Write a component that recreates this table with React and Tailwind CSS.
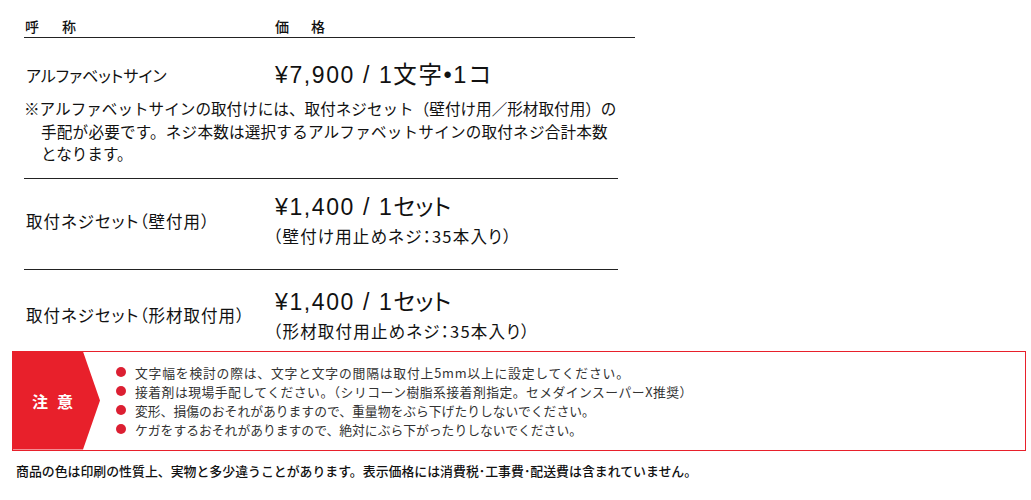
import React from "react";

const PriceCell = ({ price, unit, unitClass, note }) => (
  <div className="flex flex-col">
    <div className="text-[23px] leading-[30px] tracking-[1.6px] text-[#111] font-['Liberation_Sans','Noto_Sans_CJK_JP',sans-serif] whitespace-nowrap">
      {price}
      <span className={unitClass}>{unit}</span>
    </div>
    {note && (
      <div className="text-[16.5px] leading-[24px] tracking-[1.2px] mt-[2px] -ml-[2px] text-[#111] [font-feature-settings:'palt'] whitespace-nowrap">
        {note}
      </div>
    )}
  </div>
);

const CAUTIONS = [
  { text: "文字幅を検討の際は、文字と文字の間隔は取付上5mm以上に設定してください。", cls: "tracking-[0.8px]" },
  { text: "接着剤は現場手配してください。（シリコーン樹脂系接着剤指定。セメダインスーパーX推奨）", cls: "tracking-[0.5px]" },
  { text: "変形、損傷のおそれがありますので、重量物をぶら下げたりしないでください。", cls: "" },
  { text: "ケガをするおそれがありますので、絶対にぶら下がったりしないでください。", cls: "" },
];

export default function App() {
  return (
    <div className="w-[1031px] h-[500px] bg-white text-[#111] font-['Noto_Sans_CJK_JP','Noto_Sans',sans-serif]">
      <div className="ml-[24px] w-[611px]">
        {/* header */}
        <div className="flex pt-[17px] pb-[2px] leading-[18px] text-[14px] font-medium border-b border-[#222]">
          <div className="w-[251px] pl-[1px] flex">
            <span className="mr-[23px]">呼</span>
            <span>称</span>
          </div>
          <div className="flex">
            <span className="mr-[22px]">価</span>
            <span>格</span>
          </div>
        </div>

        <div className="w-[594px]">
          {/* alphabet sign */}
          <div className="border-b border-[#222] pb-[13px]">
            <div className="flex items-center mt-[22px] h-[30px]">
              <div className="w-[251px] pl-[2px] text-[16px] leading-[30px] [font-feature-settings:'palt']">アルファベットサイン</div>
              <PriceCell price="¥7,900 / 1" unit="文字•1コ" unitClass="text-[23.5px]" />
            </div>
            <div className="mt-[7px] text-[15.6px] leading-[22.5px] whitespace-nowrap">
              <div>※アルファベットサインの取付けには、取付ネジセット（壁付け用／形材取付用）の</div>
              <div className="pl-[17px] tracking-[0.2px]">手配が必要です。ネジ本数は選択するアルファベットサインの取付ネジ合計本数</div>
              <div className="pl-[17px]">となります。</div>
            </div>
          </div>

          {/* wall screws */}
          <div className="flex items-center border-b border-[#222] pt-[13px] pb-[21px]">
            <div className="w-[251px] pl-[2px] text-[16.5px] leading-[24px] tracking-[1px] pt-[2px] [font-feature-settings:'palt'] whitespace-nowrap">取付ネジセット（壁付用）</div>
            <PriceCell price="¥1,400 / 1" unit="セット" unitClass="tracking-normal [font-feature-settings:'palt']" note="（壁付け用止めネジ：35本入り）" />
          </div>

          {/* profile screws */}
          <div className="flex items-center pt-[17px]">
            <div className="w-[251px] pl-[2px] text-[16.5px] leading-[24px] tracking-[1px] [font-feature-settings:'palt'] whitespace-nowrap">取付ネジセット（形材取付用）</div>
            <PriceCell price="¥1,400 / 1" unit="セット" unitClass="tracking-normal [font-feature-settings:'palt']" note="（形材取付用止めネジ：35本入り）" />
          </div>
        </div>
      </div>

      {/* caution box */}
      <div className="ml-[12px] mt-[8px] w-[1014px] h-[100px] border border-[#e8202b] flex">
        <div className="w-[88px] self-stretch bg-[#e8202b] flex items-center pl-[19px] [clip-path:polygon(0_0,70px_0,87px_50%,70px_100%,0_100%)]">
          <span className="text-white font-bold text-[16px] tracking-[9px] leading-none">注意</span>
        </div>
        <ul className="ml-[15px] pt-[11px] text-[12.8px] leading-[19px] text-[#333]">
          {CAUTIONS.map((c) => (
            <li key={c.text} className={"flex items-center whitespace-nowrap " + c.cls}>
              <span className="w-[10px] h-[10px] rounded-full bg-[#dc1f32] mr-[9px] shrink-0" />
              {c.text}
            </li>
          ))}
        </ul>
      </div>

      <div className="ml-[16px] mt-[11px] text-[12.9px] leading-[18px] font-medium text-[#111] whitespace-nowrap">
        商品の色は印刷の性質上、実物と多少違うことがあります。表示価格には消費税･工事費･配送費は含まれていません。
      </div>
    </div>
  );
}
